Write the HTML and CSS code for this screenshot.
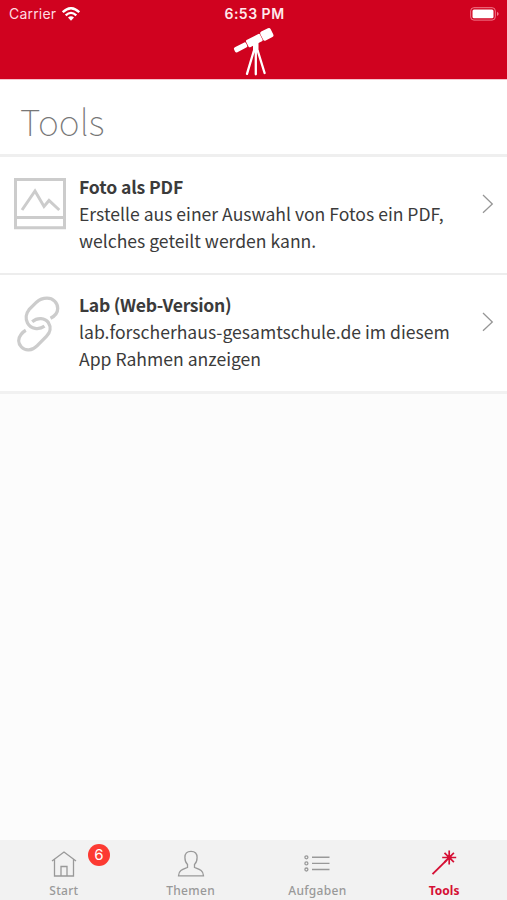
FILE: index.html
```html
<!DOCTYPE html>
<html lang="de">
<head>
<meta charset="utf-8">
<title>Tools</title>
<link rel="stylesheet" href="styles.css">
</head>
<body>
<div class="app">
  <header class="header">
    <div class="status">
      <div class="carrier"><span>Carrier</span>
        <svg class="wifi" width="18" height="14" viewBox="0 0 18 14"><g fill="none" stroke="#fff" stroke-width="2.3"><path d="M.8 5.2Q9-2.8 17.2 5.2"/><path d="M3.7 8.4Q9 3.4 14.3 8.4"/></g><path d="M6 10.5Q9 8 12 10.5L9 13.7Z" fill="#fff"/></svg>
      </div>
      <div class="time">6:53 PM</div>
      <svg class="battery" width="30" height="14" viewBox="0 0 30 14"><rect x=".7" y=".7" width="24.6" height="12.4" rx="3.2" fill="none" stroke="#f27a8c" stroke-width="1"/><rect x="2.5" y="2.5" width="21" height="8.8" rx="1.5" fill="#fff"/><path d="M27 4.7Q30.4 6.9 27 9.1Z" fill="#f27a8c"/></svg>
    </div>
    <svg class="telescope" width="42" height="50" viewBox="0 0 42 50"><g fill="#fff"><rect x="-6.5" y="-5" width="11.5" height="10" rx="2" transform="translate(34.5 7) rotate(-27)"/><rect x="-7.8" y="-4" width="15.6" height="8" rx="1.2" transform="translate(21.3 13.6) rotate(-27)"/><rect x="-6.8" y="-2.8" width="13.6" height="5.6" rx="1.8" transform="translate(7.6 20.4) rotate(-27)"/><path d="M20 17.5L25.5 15V25H20Z"/></g><path d="M20.8 24L14 46.8M22.8 24V47.3M24.8 24L31.6 46" fill="none" stroke="#fff" stroke-width="2.3" stroke-linecap="round"/></svg>
  </header>
  <main>
    <h1 class="title">Tools</h1>
    <a class="item">
      <svg class="icon" width="54" height="54" viewBox="0 0 54 54"><path d="M2.5 2.5H51.5V50.7H2.5ZM2.5 40.5H51.5" fill="none" stroke="#ccc" stroke-width="3"/><path d="M9 33L22 14L31 29.5L36 23.5L46.3 33" fill="none" stroke="#ccc" stroke-width="3"/></svg>
      <div class="text"><strong class="name">Foto als PDF</strong><p class="line">Erstelle aus einer Auswahl von Fotos ein PDF,<br>welches geteilt werden kann.</p></div>
      <svg class="chevron" width="12" height="20" viewBox="0 0 12 20"><path d="M1 1L10.3 10L1 18.7"/></svg>
    </a>
    <a class="item second">
      <svg class="icon" width="54" height="58" viewBox="0 0 54 58"><g fill="none" stroke="#ccc" stroke-width="3.3"><path d="M37.5 22.3C42 20 44.7 17.3 44.7 12.5C44.7 6.5 40 2.2 34 2.2C29.5 2.2 26.5 3.5 23.5 6.2L16 13.7C12.8 17.5 12.4 23 14.5 27C17.8 33 25.8 34.2 31.5 30.2"/><path d="M19.2 25.7C24.5 21.3 32 21.8 35.5 26.8C38.2 31 37.4 36.3 33.4 40.4L24 49.8C19 54.8 12.5 55.4 8.4 51C4.8 47.2 5 42.4 8 38.5C9.3 36.6 10.8 35.3 12.8 34.2"/></g></svg>
      <div class="text"><strong class="name lab">Lab (Web-Version)</strong><p class="line">lab.forscherhaus-gesamtschule.de im diesem<br>App Rahmen anzeigen</p></div>
      <svg class="chevron" width="12" height="20" viewBox="0 0 12 20"><path d="M1 1L10.3 10L1 18.7"/></svg>
    </a>
  </main>
  <nav class="tabs">
    <a class="tab"><span class="glyph"><svg width="28" height="30" viewBox="0 0 28 30"><path d="M2 12L14 3L26 12M4.5 10.5V27H23.5V10.5M11 27V17.5H17V27"/></svg><span class="badge">6</span></span><span class="label">Start</span></a>
    <a class="tab"><span class="glyph"><svg width="28" height="30" viewBox="0 0 28 30"><path d="M14 2.3C9.8 2.3 7.9 4.8 7.9 8.4C7.9 12 9.1 14.1 10.5 15.4V18.5C7 20 1.5 21 1.5 26.8H26.5C26.5 21 21 20 17.5 18.5V15.4C18.9 14.1 20.1 12 20.1 8.4C20.1 4.8 18.2 2.3 14 2.3Z"/></svg></span><span class="label">Themen</span></a>
    <a class="tab"><span class="glyph"><svg width="28" height="30" viewBox="0 0 28 30"><path d="M9 8.3H26.5M9 14.4H26.5M9 20.5H26.5" stroke-width="1.4"/><g stroke-width="1.3"><circle cx="3.4" cy="8.3" r="1.5"/><circle cx="3.4" cy="14.4" r="1.5"/><circle cx="3.4" cy="20.5" r="1.5"/></g></svg></span><span class="label">Aufgaben</span></a>
    <a class="tab active"><span class="glyph"><svg width="28" height="30" viewBox="0 0 28 30"><path d="M2.5 25.2L17 10.8" stroke-width="1.9"/><path d="M19.2 1.5V15.5M12.2 8.5H26.2M14.5 3.8L23.9 13.2M23.9 3.8L14.5 13.2" stroke-width="1.7"/><circle cx="19.2" cy="8.5" r="1.8"/></svg></span><span class="label">Tools</span></a>
  </nav>
</div>
</body>
</html>
```
FILE: styles.css
```css
* { box-sizing: border-box; }
body { margin: 0; font-family: "Noto Sans CJK SC", sans-serif; color: #3b3b3b; }
.app { display: flex; flex-direction: column; height: 900px; background: #fcfcfc; }
.header { height: 79px; background: #d0021f; flex: none; box-shadow: 0 1px 0 #f5c4cc; display: flex; flex-direction: column; align-items: center; position: relative; }
.status { width: 100%; height: 27px; flex: none; display: grid; grid-template-columns: 1fr auto 1fr; align-items: center; padding: 0 7px 0 9px; font-family: Inter, sans-serif; font-size: 14px; color: #fff; }
.carrier { display: flex; align-items: center; gap: 6px; color: #ffdce1; letter-spacing: 0.2px; }
.time { font-weight: 600; font-size: 14px; color: #ffe9ec; letter-spacing: 0.5px; }
.battery { justify-self: end; }
.telescope { flex: none; }
main { flex: 1; }
.title { margin: 0; height: 78px; padding: 0 20px; background: #fff; border-bottom: 3px solid #efefef; font-size: 35.5px; font-weight: 100; line-height: 84px; color: #777; }
.item { display: flex; height: 118px; padding: 16px 13px 0 13px; background: #fff; border-bottom: 2px solid #ededed; }
.item.second { height: 119px; padding-top: 17px; border-bottom-width: 3px; border-color: #f1f1f1; }
.second .text, .second .chevron { position: relative; top: -1px; }
.icon { flex: none; margin-top: 4px; }
.text { flex: 1; margin-left: 12px; white-space: nowrap; font-size: 17.57px; line-height: 27px; }
.name { display: block; font-weight: 700; letter-spacing: -0.12px; }
.lab { letter-spacing: -0.3px; }
.line { margin: 0; }
.chevron { flex: none; margin-top: 21px; fill: none; stroke: #969696; stroke-width: 1.3; }
.tabs { height: 60px; flex: none; background: #f2f2f2; display: grid; grid-template-columns: repeat(4, 1fr); }
.tab { display: flex; flex-direction: column; align-items: center; padding: 9px 0 0 1px; color: #999; }
.glyph { position: relative; height: 30px; }
.glyph svg { display: block; fill: none; stroke: currentColor; stroke-width: 1.3; }
.label { font-family: "Noto Sans", sans-serif; font-weight: 500; font-size: 12px; line-height: 24px; letter-spacing: 0.3px; }
.active { color: #d51035; }
.active .label { font-weight: 700; letter-spacing: 0; }
.badge { position: absolute; left: 38px; top: -5px; width: 22px; height: 22px; border-radius: 50%; background: #fc3a32; color: #fff; font: 15px/22px Inter, sans-serif; text-align: center; }
```
